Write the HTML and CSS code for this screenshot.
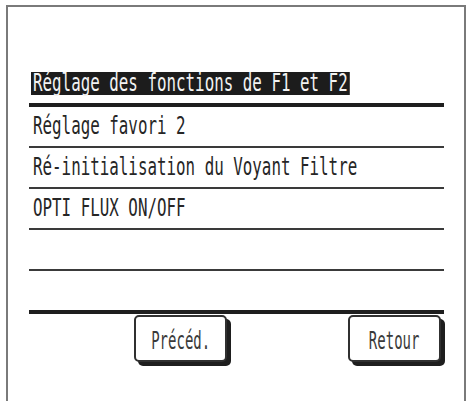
FILE: index.html
```html
<!DOCTYPE html>
<html lang="fr">
<head>
<meta charset="utf-8">
<title>Menu</title>
<link rel="stylesheet" href="styles.css">
</head>
<body>
<div class="frame">
  <ul class="menu">
    <li class="row first"><span class="label selected">Réglage des fonctions de F1 et F2</span></li>
    <li class="row"><span class="label">Réglage favori 2</span></li>
    <li class="row"><span class="label">Ré-initialisation du Voyant Filtre</span></li>
    <li class="row"><span class="label">OPTI FLUX ON/OFF</span></li>
    <li class="row"></li>
    <li class="row last"></li>
  </ul>
  <div class="buttons">
    <button class="btn"><span class="btn-text">Précéd.</span></button>
    <button class="btn"><span class="btn-text">Retour</span></button>
  </div>
</div>
</body>
</html>
```
FILE: styles.css
```css
html, body {
  margin: 0;
  padding: 0;
  background: #ffffff;
  overflow: hidden;
}

body {
  width: 468px;
  height: 401px;
  font-family: "DejaVu Sans Mono", "Liberation Mono", monospace;
  color: #262626;
}

.frame {
  box-sizing: border-box;
  margin: 5px 0 0 6px;
  width: 460px;
  height: 410px;
  border: 2px solid #7a7a7a;
  border-bottom: none;
  padding: 57px 0 0 21px;
}

.menu {
  list-style: none;
  margin: 0;
  padding: 0;
  width: 415px;
}

.row {
  height: 39px;
  border-bottom: 2px solid #3a3a3a;
  display: flex;
  align-items: center;
}

.row.first,
.row.last {
  border-bottom: 4px solid #1e1e1e;
}

.label {
  display: inline-block;
  margin-left: 2px;
  padding: 0 3px;
  height: 23px;
  line-height: 23px;
  font-size: 24px;
  white-space: nowrap;
  transform: scaleX(0.66);
  transform-origin: left center;
}

.label.selected {
  background: #1c1c1c;
  color: #f2f2f2;
}

.buttons {
  display: flex;
  gap: 121px;
  padding-left: 105px;
  margin-top: 1px;
}

.btn {
  box-sizing: border-box;
  width: 93px;
  height: 47px;
  padding: 0;
  margin: 0;
  background: #ffffff;
  border: 2px solid #303030;
  border-radius: 5px;
  box-shadow: 4px 4px 0 #1e1e1e;
  display: flex;
  align-items: center;
  justify-content: center;
  font-family: "DejaVu Sans Mono", "Liberation Mono", monospace;
  color: #3a3a3a;
}

.btn-text {
  display: inline-block;
  font-size: 25px;
  line-height: 25px;
  white-space: nowrap;
  transform: scaleX(0.56);
  transform-origin: center center;
  margin-top: 3px;
}
```
